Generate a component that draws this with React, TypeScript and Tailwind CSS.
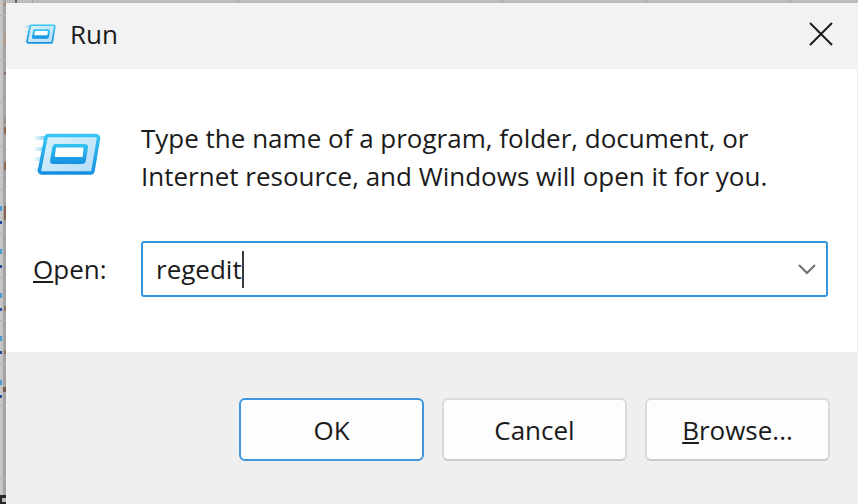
import { useState } from 'react';

const gridRows = [15, 59, 102, 146, 189, 233, 277, 320, 363, 405, 478];
const gridColumns = [32, 238, 502, 646, 790];

// Bits of the spreadsheet text that stick out from behind the dialog
const textBits = [
  { x: 15, y: 0, w: 2, h: 3, fill: '#4a5a78' },
  { x: 4, y: 3, w: 2, h: 3, fill: '#a98a70' },
  { x: 4, y: 34, w: 2, h: 11, fill: '#b49a86' },
  { x: 4, y: 72, w: 2, h: 3, fill: '#8c7466' },
  { x: 4, y: 118, w: 2, h: 5, fill: '#a58e7c' },
  { x: 4, y: 127, w: 2, h: 7, fill: '#8c6a52' },
  { x: 4, y: 162, w: 2, h: 8, fill: '#8c6a52' },
  { x: 4, y: 177, w: 2, h: 3, fill: '#a89483' },
  { x: 4, y: 206, w: 2, h: 14, fill: '#8a6650' },
  { x: 0, y: 206, w: 2, h: 5, fill: '#4b9bd0' },
  { x: 0, y: 221, w: 2, h: 3, fill: '#2c4a9a' },
  { x: 0, y: 249, w: 2, h: 5, fill: '#4b9bd0' },
  { x: 0, y: 265, w: 2, h: 3, fill: '#2c4a9a' },
  { x: 0, y: 293, w: 2, h: 5, fill: '#4b9bd0' },
  { x: 0, y: 308, w: 2, h: 3, fill: '#2c4a9a' },
  { x: 4, y: 306, w: 2, h: 5, fill: '#957460' },
  { x: 0, y: 336, w: 2, h: 5, fill: '#4b9bd0' },
  { x: 0, y: 351, w: 2, h: 3, fill: '#2c4a9a' },
  { x: 4, y: 350, w: 2, h: 4, fill: '#957460' },
  { x: 0, y: 380, w: 2, h: 5, fill: '#4b9bd0' },
  { x: 3, y: 387, w: 3, h: 5, fill: '#75604f' },
  { x: 0, y: 395, w: 2, h: 3, fill: '#2c4a9a' },
  { x: 0, y: 495, w: 6, h: 9, fill: '#262626' },
  { x: 2, y: 498, w: 4, h: 4, fill: '#b8b8b8' },
];

const SheetBackdrop = () => (
  <svg className="absolute inset-0 h-full w-full" aria-hidden="true">
    <defs>
      <linearGradient id="edge" x1="0" x2="1" y1="0" y2="0">
        <stop offset="0" stopColor="#c9c9c9" />
        <stop offset="0.45" stopColor="#c0c0c0" />
        <stop offset="0.55" stopColor="#a6a6a6" />
        <stop offset="1" stopColor="#a2a2a2" />
      </linearGradient>
    </defs>
    <rect width="100%" height="3" fill="#bcbcbc" />
    <rect width="6" height="100%" fill="url(#edge)" />
    {gridRows.map((y) => (
      <rect key={y} x="0" y={y} width="6" height="1" fill="#b0b0b0" />
    ))}
    {gridColumns.map((x) => (
      <rect key={x} x={x} y="0" width="1" height="3" fill="#a3a3a3" />
    ))}
    {textBits.map((bit) => (
      <rect key={`${bit.x}-${bit.y}`} x={bit.x} y={bit.y} width={bit.w} height={bit.h} fill={bit.fill} />
    ))}
  </svg>
);

const RunIcon = ({ className }: { className: string }) => (
  <svg className={className} viewBox="0 0 68 46" fill="none" aria-hidden="true">
    <defs>
      <linearGradient id="runFrame" x1="0" x2="0" y1="0" y2="1">
        <stop offset="0" stopColor="#35c5f2" />
        <stop offset="1" stopColor="#1590df" />
      </linearGradient>
      <linearGradient id="runFace" x1="0" x2="1" y1="0" y2="1">
        <stop offset="0" stopColor="#dcf2fc" />
        <stop offset="1" stopColor="#b4dcf7" />
      </linearGradient>
      <linearGradient id="runTrail" x1="0" x2="1" y1="0" y2="0">
        <stop offset="0" stopColor="#8fd6f4" stopOpacity="0.1" />
        <stop offset="1" stopColor="#7accf0" />
      </linearGradient>
    </defs>
    <path d="M1 5h12v4H1zM1 16h11v4H1zM1 26h9v4H1zM1 37h7v4H1z" fill="url(#runTrail)" />
    <path
      d="M15.500 4.500H63a2.500 2.500 0 0 1 2.500 3L60 40a2.500 2.500 0 0 1-2.500 2H9a2.500 2.500 0 0 1-2.500-3L13 6.500a2.500 2.500 0 0 1 2.500-2z"
      fill="url(#runFace)"
      stroke="url(#runFrame)"
      strokeWidth="3.500"
    />
    <path
      d="M22.500 13H52a3 3 0 0 1 3 3.500L52.800 30a3.500 3.500 0 0 1-3.500 3H20a3 3 0 0 1-3-3.500L19.500 15.500a3 3 0 0 1 3-2.500z"
      fill="url(#runFrame)"
    />
    <path d="M24 16.500H49.500a1 1 0 0 1 1 1.100L49.800 25a1 1 0 0 1-1 .900H22.800a1 1 0 0 1-1-1.100L23 17.500a1 1 0 0 1 1-1z" fill="#fff" />
  </svg>
);

const App = () => {
  const [command, setCommand] = useState('regedit');

  return (
    <div className="relative min-h-screen bg-[#efefef] font-['Open_Sans','Noto_Sans',sans-serif] text-[26px] leading-[38px] text-[#1b1b1b]">
      <SheetBackdrop />
      <div className="relative pl-1.5 pt-[3px]">
        <form role="dialog" aria-labelledby="run-title" className="bg-[#efefef]" onSubmit={(e) => e.preventDefault()}>
          <header className="flex h-[66px] items-center bg-[#f2f2f2] pb-1 pl-[18px] pr-[25px]">
            <RunIcon className="h-[22px] w-8" />
            <h1 id="run-title" className="ml-3.5 flex-1">Run</h1>
            <button type="button" aria-label="Close">
              <svg className="size-6" viewBox="0 0 24 24" fill="none" stroke="#1b1b1b" strokeWidth="2" aria-hidden="true">
                <path d="M1 1 23 23M23 1 1 23" />
              </svg>
            </button>
          </header>

          <main className="mr-px bg-white pb-[55px] pl-[27px] pr-[29px] pt-[50px]">
            <div className="flex items-start">
              <div className="w-[108px] shrink-0 pt-3">
                <RunIcon className="h-[46px] w-[68px]" />
              </div>
              <p>
                Type the name of a program, folder, document, or
                <br />
                Internet resource, and Windows will open it for you.
              </p>
            </div>

            <div className="mt-[46px] flex items-center">
              <label htmlFor="command" className="w-[108px] shrink-0">
                <u className="decoration-2 underline-offset-2">O</u>pen:
              </label>
              <div className="flex h-14 flex-1 items-center rounded-[3px] border-2 border-[#3694dc] bg-white pl-[13px] pr-2.5">
                <input
                  id="command"
                  type="text"
                  value={command}
                  onChange={(e) => setCommand(e.target.value)}
                  className="field-sizing-content caret-transparent outline-none"
                />
                <span className="h-[37px] w-0.5 bg-[#3a3a3a]" />
                <button type="button" aria-label="Show recent commands" className="ml-auto">
                  <svg className="h-3 w-[18px]" viewBox="0 0 18 12" fill="none" stroke="#6e6e6e" strokeWidth="2" aria-hidden="true">
                    <path d="M1 2 9 10 17 2" />
                  </svg>
                </button>
              </div>
            </div>
          </main>

          <footer className="flex justify-end gap-[18px] pb-[42px] pl-6 pr-7 pt-[46px]">
            <button type="submit" className="h-[63px] w-[185px] rounded-md border-2 border-[#3f98df] bg-[#fdfdfd]">
              OK
            </button>
            <button type="button" className="h-[63px] w-[185px] rounded-md border-2 border-[#dadada] border-b-[#cacaca] bg-[#fdfdfd]">
              Cancel
            </button>
            <button type="button" className="h-[63px] w-[185px] rounded-md border-2 border-[#dadada] border-b-[#cacaca] bg-[#fdfdfd]">
              <u className="decoration-2 underline-offset-2">B</u>rowse...
            </button>
          </footer>
        </form>
      </div>
    </div>
  );
};

export default App;
